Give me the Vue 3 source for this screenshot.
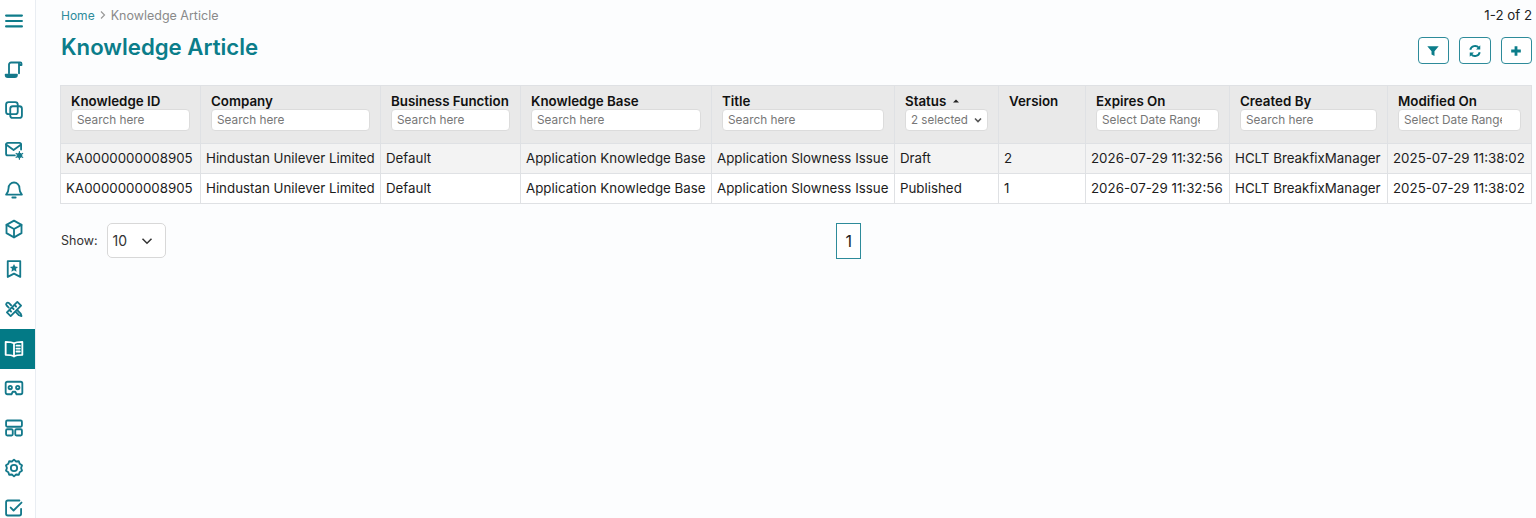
<template>
  <div class="page">
    <aside class="sidebar">
      <button class="menu-btn" aria-label="Menu">
        <svg viewBox="0 0 24 24" width="20" height="20"><path d="M2.500 5.500h19M2.500 12h19M2.500 18.500h19" /></svg>
      </button>
      <nav class="nav">
        <a v-for="item in navItems" :key="item.name" class="nav-item" :class="{ active: item.active }" :title="item.name">
          <svg viewBox="0 0 24 24" width="20" height="20" v-html="item.icon"></svg>
        </a>
      </nav>
    </aside>

    <main class="content">
      <div class="top-row">
        <div class="breadcrumb">
          <a class="crumb-link">Home</a>
          <svg viewBox="0 0 10 10" width="10" height="10"><path d="M3 1.500 6.500 5 3 8.500" /></svg>
          <span>Knowledge Article</span>
        </div>
        <div class="count">1-2 of 2</div>
      </div>

      <div class="title-row">
        <h1>Knowledge Article</h1>
        <div class="actions">
          <button class="action-btn" aria-label="Filter">
            <svg viewBox="0 0 16 16" width="14" height="14"><path class="solid" d="M1.500 2.500h13L9.700 8.400v5.200L6.300 12V8.400z" /></svg>
          </button>
          <button class="action-btn" aria-label="Refresh">
            <svg viewBox="0 0 16 16" width="14" height="14"><path class="line" d="M2.600 6.600A5.600 5.600 0 0 1 12.400 4.300M13.400 9.400A5.600 5.600 0 0 1 3.600 11.700" /><path class="solid" d="M14 1.400v4.800H9.200zM2 14.600V9.800h4.800z" /></svg>
          </button>
          <button class="action-btn" aria-label="Add">
            <svg viewBox="0 0 16 16" width="14" height="14"><path class="line thick" d="M8 2.500v11M2.500 8h11" /></svg>
          </button>
        </div>
      </div>

      <table class="grid">
        <colgroup>
          <col v-for="col in columns" :key="col.label" :style="{ width: col.width + 'px' }" />
        </colgroup>
        <thead>
          <tr>
            <th v-for="col in columns" :key="col.label">
              <div class="th-label">
                {{ col.label }}
                <svg v-if="col.sort" class="sort" viewBox="0 0 8 8" width="8" height="8"><path d="M1 5.500h6L4 2.500z" /></svg>
              </div>
              <input v-if="col.filter" class="th-input" :class="{ date: col.date }" type="text" :placeholder="col.filter" />
              <div v-else-if="col.select" class="th-select">
                <span>{{ col.select }}</span>
                <svg viewBox="0 0 10 10" width="10" height="10"><path d="M2 3.500 5 6.500 8 3.500" /></svg>
              </div>
            </th>
          </tr>
        </thead>
        <tbody>
          <tr v-for="row in rows" :key="row.version">
            <td>{{ row.id }}</td>
            <td>{{ row.company }}</td>
            <td>{{ row.fn }}</td>
            <td>{{ row.base }}</td>
            <td>{{ row.title }}</td>
            <td>{{ row.status }}</td>
            <td>{{ row.version }}</td>
            <td>{{ row.expires }}</td>
            <td>{{ row.createdBy }}</td>
            <td>{{ row.modified }}</td>
          </tr>
        </tbody>
      </table>

      <div class="pager-row">
        <div class="show">
          <span>Show:</span>
          <div class="page-size">
            <span>10</span>
            <svg viewBox="0 0 14 14" width="14" height="14"><path d="M2.500 4.800 7 9.200l4.500-4.400" /></svg>
          </div>
        </div>
        <div class="pages"><span class="page-num">1</span></div>
      </div>
    </main>
  </div>
</template>

<script setup>
const navItems = [
  { name: 'Articles', icon: '<path d="M6 16V5.500A2.500 2.500 0 0 1 8.500 3H19.500a1.500 1.500 0 0 1 1.500 1.500V6h-3M18 4v12"/><path d="M2 17.500h13.500V18a2.500 2.500 0 0 1-2.500 2.500H4.500A2.500 2.500 0 0 1 2 18z" fill="currentColor"/>' },
  { name: 'Copies', icon: '<rect x="2.500" y="2.500" width="14" height="14.500" rx="3"/><rect x="7.500" y="7.500" width="14" height="14" rx="3"/>' },
  { name: 'Mail settings', icon: '<path d="M13 18.500H4.500A2 2 0 0 1 2.500 16.500V5.500a2 2 0 0 1 2-2h14a2 2 0 0 1 2 2v6"/><path d="m2.500 5.500 9 6.500 9-6.500"/><circle cx="18.500" cy="18.500" r="2.800" fill="currentColor" stroke-width="1"/><path d="M18.500 14v1.500M18.500 21.500V23M14.600 16.200l1.300.8M21.100 20l1.300.8M14.600 20.800l1.300-.8M21.100 17l1.300-.8" stroke-width="1.500"/>' },
  { name: 'Notifications', icon: '<path d="M12 3a6.500 6.500 0 0 0-6.500 6.500c0 4.500-1.500 6.500-3 8h19c-1.500-1.500-3-3.500-3-8A6.500 6.500 0 0 0 12 3z"/><path d="M10 21h4"/>' },
  { name: 'Packages', icon: '<path d="M12 2 21 7v10l-9 5-9-5V7z"/><path d="M3 7l9 5 9-5M12 12v10"/>' },
  { name: 'Saved', icon: '<path d="M4.500 2.500h15v19l-7.500-4-7.500 4z"/><path class="fill" d="m12 6 1.500 3.100 3.400.4-2.500 2.300.7 3.400-3.100-1.700-3.100 1.700.7-3.400-2.500-2.300 3.400-.4z"/>' },
  { name: 'Design', icon: '<path d="m16 3.500 4.500 4.500L8 20.500 3.500 16zM12.500 7l2 2M9.500 10l2 2M6.500 13l2 2"/><path d="M8.500 7.500 6 5a2 2 0 0 0-2.800 0 2 2 0 0 0 0 2.800L5.700 10.300M14 15.500l4 4 3 1-1-3-4-4"/>' },
  { name: 'Knowledge', active: true, icon: '<path d="M12 5.500C10 4 7 3.500 2 3.500v15.500c5 0 8 .500 10 2 2-1.500 5-2 10-2V3.500c-5 0-8 .500-10 2zM12 5.500V21M15 8h4M15 11.500h4M15 15h4"/>' },
  { name: 'Virtual', icon: '<path d="M4 4.500h16a2 2 0 0 1 2 2v11a2 2 0 0 1-2 2h-5l-1.500-3h-3L9 19.500H4a2 2 0 0 1-2-2v-11a2 2 0 0 1 2-2z"/><circle cx="7.500" cy="11.500" r="2"/><circle cx="16.500" cy="11.500" r="2"/>' },
  { name: 'Layout', icon: '<rect x="2.500" y="3" width="19" height="7.500" rx="1.500"/><rect x="2.500" y="13.500" width="8" height="7.500" rx="1.500"/><rect x="13.500" y="13.500" width="8" height="7.500" rx="1.500"/>' },
  { name: 'Settings', icon: '<path d="M12 2 14.500 4.200 17.800 3.900 18.800 7 21.600 8.800 20.500 12 21.600 15.200 18.800 17 17.800 20.100 14.500 19.800 12 22 9.500 19.800 6.200 20.100 5.200 17 2.400 15.200 3.500 12 2.400 8.800 5.200 7 6.200 3.900 9.500 4.200z"/><circle cx="12" cy="12" r="3.800"/>' },
  { name: 'Tasks', icon: '<path d="M20.500 13v6a2 2 0 0 1-2 2h-14a2 2 0 0 1-2-2V5a2 2 0 0 1 2-2h14"/><path d="m8 11.500 3.500 3.500 9.500-9.500"/>' },
]

const columns = [
  { label: 'Knowledge ID', width: 140, filter: 'Search here' },
  { label: 'Company', width: 180, filter: 'Search here' },
  { label: 'Business Function', width: 140, filter: 'Search here' },
  { label: 'Knowledge Base', width: 191, filter: 'Search here' },
  { label: 'Title', width: 183, filter: 'Search here' },
  { label: 'Status', width: 104, sort: true, select: '2 selected' },
  { label: 'Version', width: 87 },
  { label: 'Expires On', width: 144, filter: 'Select Date Range', date: true },
  { label: 'Created By', width: 158, filter: 'Search here' },
  { label: 'Modified On', width: 144, filter: 'Select Date Range', date: true },
]

const base = {
  id: 'KA0000000008905',
  company: 'Hindustan Unilever Limited',
  fn: 'Default',
  base: 'Application Knowledge Base',
  title: 'Application Slowness Issue',
  expires: '2026-07-29 11:32:56',
  createdBy: 'HCLT BreakfixManager',
  modified: '2025-07-29 11:38:02',
}

const rows = [
  { ...base, status: 'Draft', version: 2 },
  { ...base, status: 'Published', version: 1 },
]
</script>

<style>
html, body {
  margin: 0;
  background: #fcfdfe;
}
</style>

<style scoped>
.page {
  display: flex;
  height: 518px;
  overflow: hidden;
  background: #fcfdfe;
  color: #1a1a1a;
  font-family: Inter, "Liberation Sans", sans-serif;
  font-size: 14px;
}

/* left icon rail */
.sidebar {
  width: 36px;
  box-sizing: border-box;
  flex-shrink: 0;
  background: #fff;
  border-right: 1px solid #e9edf2;
  overflow: hidden;
}
.menu-btn {
  display: flex;
  align-items: center;
  justify-content: center;
  width: 100%;
  height: 42px;
  margin-bottom: 8.500px;
  padding: 0 7px 0 0;
  background: none;
  border: none;
  color: #0f7c8a;
}
.menu-btn svg path {
  fill: none;
  stroke: currentColor;
  stroke-width: 2.600;
  stroke-linecap: round;
}
.nav-item {
  display: flex;
  align-items: center;
  justify-content: center;
  height: 39.750px;
  padding-right: 7px;
  color: #14798b;
}
.nav-item.active {
  background: #037a86;
  color: #fff;
}
.nav-item svg {
  fill: none;
  stroke: currentColor;
  stroke-width: 2.200;
  stroke-linecap: round;
  stroke-linejoin: round;
}
.nav-item svg :deep(.fill) {
  fill: currentColor;
  stroke: none;
}

/* main area */
.content {
  flex: 1;
  min-width: 0;
  padding: 0 4px 0 25px;
}
.top-row {
  display: flex;
  justify-content: space-between;
  height: 30px;
  padding-top: 7px;
  box-sizing: border-box;
}
.breadcrumb {
  display: flex;
  align-items: center;
  gap: 3px;
  height: 16px;
  font-size: 12.500px;
  color: #8a8a8a;
}
.crumb-link {
  color: #2d8b9a;
  font-size: 12px;
}
.breadcrumb svg path {
  fill: none;
  stroke: #999;
  stroke-width: 1.200;
}
.count {
  font-size: 13.300px;
  color: #222;
  line-height: 16px;
}
.title-row {
  display: flex;
  justify-content: space-between;
  align-items: flex-start;
  height: 55px;
}
h1 {
  margin: 0;
  color: #0b7d8a;
  font-size: 22.200px;
  font-weight: 600;
  line-height: 34px;
}
.actions {
  display: flex;
  gap: 10px;
  padding-top: 7px;
}
.action-btn {
  display: flex;
  align-items: center;
  justify-content: center;
  width: 31.500px;
  height: 27px;
  padding: 0;
  background: #fff;
  border: 1px solid #2d8b9a;
  border-radius: 4px;
}
.solid {
  fill: #0b7d8a;
}
.line {
  fill: none;
  stroke: #0b7d8a;
  stroke-width: 2.200;
}
.line.thick {
  stroke-width: 3.200;
}

/* table */
.grid {
  width: 1471px;
  margin-left: -1px;
  table-layout: fixed;
  border-collapse: collapse;
}
.grid th,
.grid td {
  border: 1px solid #dfe1e4;
  overflow: hidden;
  white-space: nowrap;
  text-align: left;
}
.grid th {
  height: 58px;
  box-sizing: border-box;
  padding: 6px 10px 0;
  vertical-align: top;
  background: #e9e9e9;
}
.grid td {
  height: 30px;
  box-sizing: border-box;
  padding: 0 5px 2px;
  font-size: 13.320px;
  color: #1c1c1c;
  background: #fff;
}
.grid tbody tr:first-child td {
  background: #f3f3f3;
}
.th-label {
  display: flex;
  align-items: center;
  gap: 6px;
  height: 17px;
  font-size: 13.350px;
  font-weight: 600;
  color: #111;
}
.sort path {
  fill: #222;
}
.th-input,
.th-select {
  display: block;
  box-sizing: border-box;
  width: 100%;
  height: 22px;
  padding: 0 5px;
  background: #fff;
  border: 1px solid #dcdcdc;
  border-radius: 4px;
  outline: none;
  font-family: inherit;
  font-size: 11.800px;
  font-weight: 400;
  color: #777;
}
.th-input.date {
  padding-right: 18px;
}
.th-input::placeholder {
  color: #777;
  opacity: 1;
}
.th-select {
  display: flex;
  align-items: center;
  justify-content: space-between;
  font-size: 11.600px;
  padding-right: 4px;
}
.th-select svg path {
  fill: none;
  stroke: #555;
  stroke-width: 1.600;
}

/* pager */
.pager-row {
  display: flex;
  align-items: flex-start;
  height: 36px;
  margin-top: 19px;
}
.show {
  display: flex;
  align-items: center;
  gap: 9px;
  height: 35px;
  font-size: 12.500px;
  color: #333;
}
.pages {
  flex: 1;
  display: flex;
  justify-content: center;
}
.page-size {
  display: flex;
  align-items: center;
  justify-content: space-between;
  box-sizing: border-box;
  width: 59px;
  height: 35px;
  padding: 0 11px 0 5px;
  background: #fff;
  border: 1px solid #d8d8d8;
  border-radius: 5px;
  font-size: 14px;
}
.page-size svg path {
  fill: none;
  stroke: #333;
  stroke-width: 1.500;
}
.page-num {
  display: flex;
  align-items: center;
  justify-content: center;
  box-sizing: border-box;
  width: 25px;
  height: 36px;
  background: #fff;
  border: 1px solid #2d8b9a;
  font-size: 16px;
  color: #222;
}
</style>
